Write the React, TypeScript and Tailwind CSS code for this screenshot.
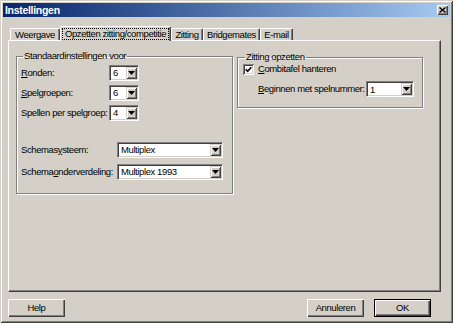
import React from "react";

const FONT = "font-['Liberation_Sans',Arial,sans-serif]";

function Arrow() {
  return (
    <svg width="7" height="4" viewBox="0 0 7 4" className="block">
      <polygon points="0,0 7,0 3.5,4" fill="#000" />
    </svg>
  );
}

function Combo({ value, w }: { value: string; w: string }) {
  return (
    <div
      className={`${w} h-[16px] shrink-0 flex items-stretch bg-white border-t border-l border-[#808080] border-r border-b border-r-white border-b-white shadow-[inset_1px_1px_#404040,inset_-1px_-1px_#d4d0c8]`}
    >
      <div className="flex-1 flex items-center pl-[3px] leading-none whitespace-nowrap">{value}</div>
      <div className="w-[11px] my-[1px] mr-[1px] bg-[#d4d0c8] flex items-center justify-center shadow-[inset_1px_1px_#d4d0c8,inset_-1px_-1px_#404040,inset_2px_2px_#fff,inset_-2px_-2px_#808080]">
        <Arrow />
      </div>
    </div>
  );
}

function Button({ label, isDefault }: { label: string; isDefault?: boolean }) {
  return (
    <div
      className={`w-[57px] h-[18px] flex items-center justify-center ${
        isDefault
          ? "border border-black shadow-[inset_1px_1px_#fff,inset_-1px_-1px_#404040,inset_-2px_-2px_#808080]"
          : "shadow-[inset_1px_1px_#fff,inset_-1px_-1px_#404040,inset_-2px_-2px_#808080]"
      }`}
    >
      {label}
    </div>
  );
}

function Tab({ label, w, selected }: { label: string; w: string; selected?: boolean }) {
  if (selected) {
    return (
      <div
        className={`${w} h-[15px] self-start relative z-10 bg-[#d4d0c8] border-l border-t border-white rounded-tl-[2px] rounded-tr-[2px] border-r border-r-[#404040] shadow-[inset_-1px_0_#808080] flex items-start justify-center pt-[1px] whitespace-nowrap`}
      >
        <span className="border border-dotted border-black px-[2px] leading-[10px] h-[12px]">{label}</span>
      </div>
    );
  }
  return (
    <div
      className={`${w} h-[12px] bg-[#d4d0c8] border-l border-t border-white rounded-tl-[2px] rounded-tr-[2px] border-r border-r-[#404040] shadow-[inset_-1px_0_#808080] flex items-center justify-center leading-none pt-[1px] whitespace-nowrap`}
    >
      {label}
    </div>
  );
}

export default function App() {
  return (
    <div
      className={`w-[453px] h-[323px] bg-[#d4d0c8] p-[3px] flex flex-col overflow-hidden text-[9.5px] tracking-[-0.4px] whitespace-nowrap text-black ${FONT} shadow-[inset_1px_1px_#d4d0c8,inset_-1px_-1px_#404040,inset_2px_2px_#fff,inset_-2px_-2px_#808080]`}
    >
      {/* Title bar */}
      <div className="h-[14px] shrink-0 bg-gradient-to-r from-[#0a246a] to-[#a6caf0] flex items-center justify-between pl-[2px] pr-[2px]">
        <span className="text-white font-bold text-[10.5px] leading-none tracking-[-0.3px]">
          Instellingen
        </span>
        <div className="w-[11px] h-[10px] bg-[#d4d0c8] flex items-center justify-center shadow-[inset_1px_1px_#fff,inset_-1px_-1px_#404040,inset_-2px_-2px_#808080]">
          <svg width="7" height="6" viewBox="0 0 7 6" className="block">
            <path d="M0.5 0.5 L6.5 5.5 M6.5 0.5 L0.5 5.5" stroke="#000" strokeWidth="1.4" />
          </svg>
        </div>
      </div>

      {/* Tabs */}
      <div className="mt-[9px] h-[14px] shrink-0 flex items-end pl-[7px]">
        <Tab label="Weergave" w="w-[50px]" />
        <Tab label="Opzetten zitting/competitie" w="w-[111px]" selected />
        <Tab label="Zitting" w="w-[32px]" />
        <Tab label="Bridgemates" w="w-[57px]" />
        <Tab label="E-mail" w="w-[33px]" />
      </div>

      {/* Panel */}
      <div className="ml-[5px] w-[433px] h-[252px] shrink-0 border-t border-l border-white border-r border-b border-r-[#404040] border-b-[#404040] shadow-[inset_-1px_-1px_#808080] flex items-start gap-[4px] pl-[7px] pt-[9px]">
        {/* Group 1 */}
        <fieldset className="w-[217px] h-[144px] border border-[#808080] shadow-[inset_1px_1px_#fff,1px_1px_#fff] px-[4px]">
          <legend className="ml-[2px] px-[1px] leading-[12px]">Standaardinstellingen voor</legend>
          <div className="flex flex-col gap-[4px] mt-[3px]">
            <div className="flex items-center">
              <span className="w-[88px]"><span className="underline">R</span>onden:</span>
              <Combo value="6" w="w-[30px]" />
            </div>
            <div className="flex items-center">
              <span className="w-[88px]"><span className="underline">S</span>pelgroepen:</span>
              <Combo value="6" w="w-[30px]" />
            </div>
            <div className="flex items-center">
              <span className="w-[88px]">Spellen per spelgroep:</span>
              <Combo value="4" w="w-[30px]" />
            </div>
          </div>
          <div className="flex flex-col gap-[6px] mt-[21px]">
            <div className="flex items-center">
              <span className="w-[96px]">Schemas<span className="underline">y</span>steem:</span>
              <Combo value="Multiplex" w="w-[106px]" />
            </div>
            <div className="flex items-center">
              <span className="w-[96px]">Schema<span className="underline">o</span>nderverdeling:</span>
              <Combo value="Multiplex 1993" w="w-[106px]" />
            </div>
          </div>
        </fieldset>

        {/* Group 2 */}
        <fieldset className="w-[186px] h-[57px] border border-[#808080] shadow-[inset_1px_1px_#fff,1px_1px_#fff] px-[5px] mt-[1px]">
          <legend className="ml-[2px] px-[1px] leading-[12px]">Zitting opzetten</legend>
          <div className="flex items-center gap-[4px] mt-[-1px]">
            <div className="w-[11px] h-[11px] bg-white flex items-center justify-center shadow-[inset_1px_1px_#808080,inset_-1px_-1px_#fff,inset_2px_2px_#404040,inset_-2px_-2px_#d4d0c8]">
              <svg width="7" height="7" viewBox="0 0 7 7" className="block">
                <path d="M0.7 3.2 L2.7 5.3 L6.3 1.2" stroke="#000" strokeWidth="1.6" fill="none" />
              </svg>
            </div>
            <span><span className="underline">C</span>ombitafel hanteren</span>
          </div>
          <div className="flex items-center mt-[5px] pl-[15px]">
            <span className="w-[108px]"><span className="underline">B</span>eginnen met spelnummer:</span>
            <Combo value="1" w="w-[48px]" />
          </div>
        </fieldset>
      </div>

      {/* Buttons */}
      <div className="mt-[7px] ml-[5px] w-[423px] flex items-center">
        <Button label="Help" />
        <div className="flex-1" />
        <Button label="Annuleren" />
        <div className="w-[10px]" />
        <Button label="OK" isDefault />
      </div>
    </div>
  );
}
